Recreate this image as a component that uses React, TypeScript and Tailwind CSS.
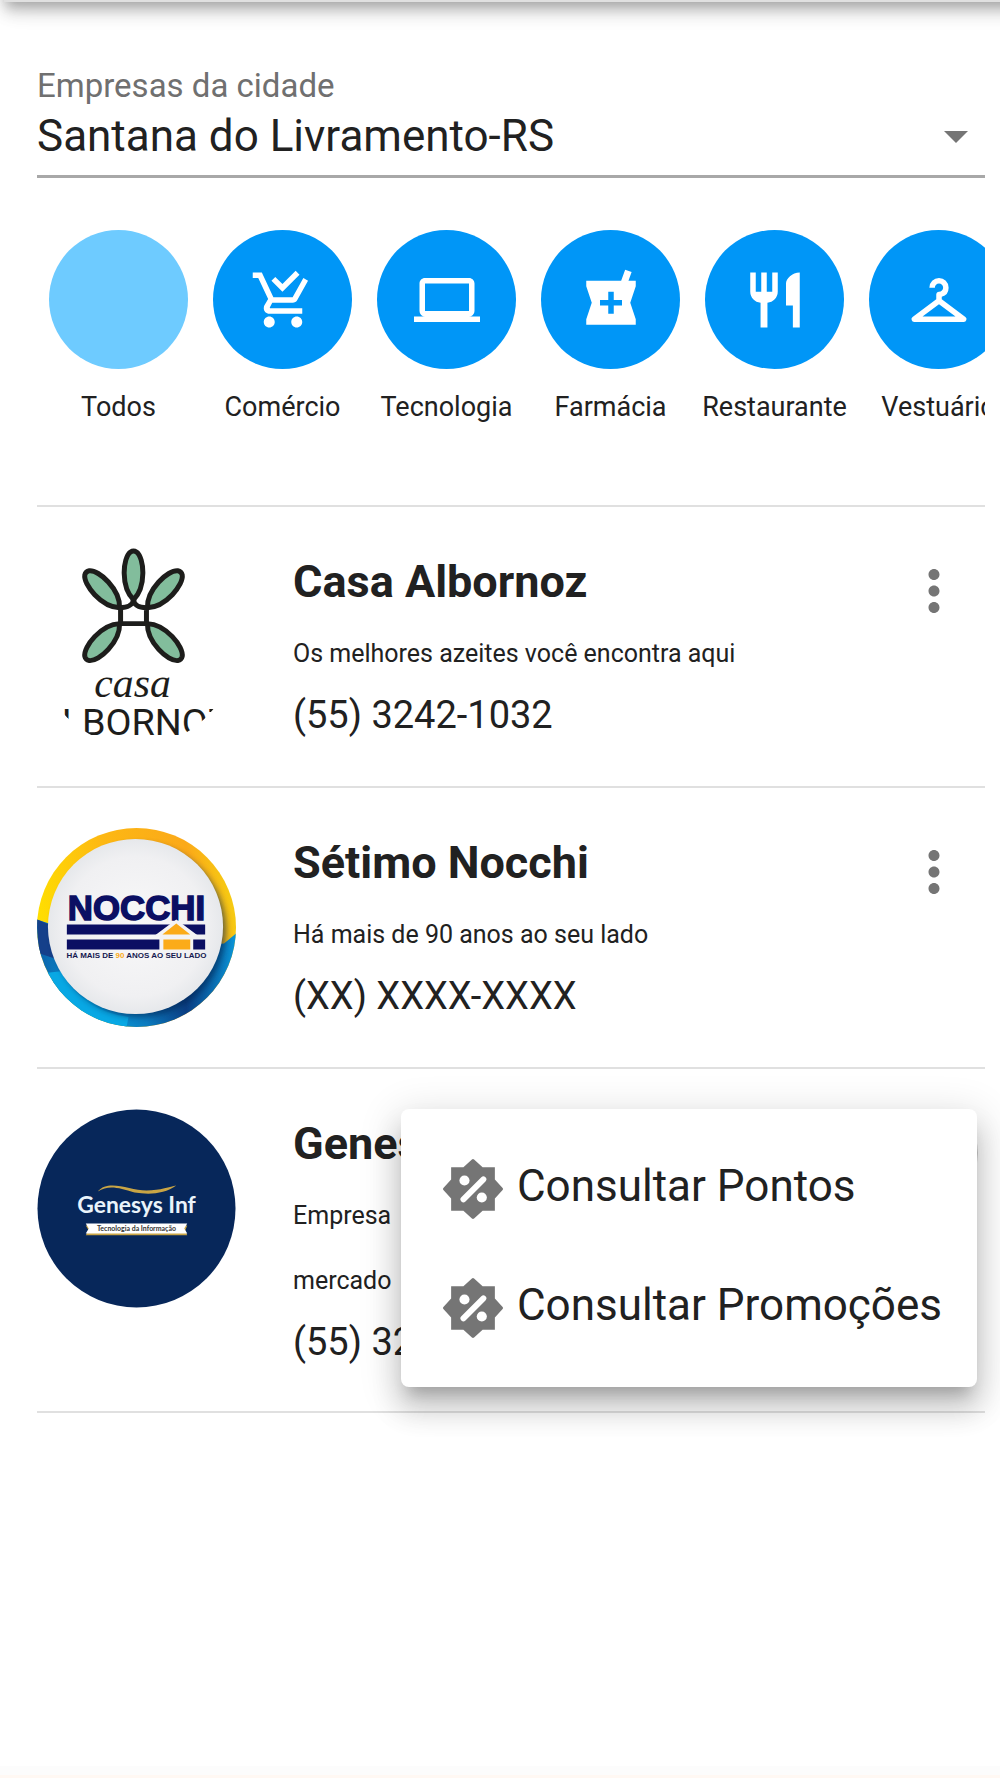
import type { ReactNode } from "react";

const ICONS = {
  cart: "M9 20C9 21.1 8.1 22 7 22S5 21.1 5 20 5.9 18 7 18 9 18.9 9 20M17 18C15.9 18 15 18.9 15 20S15.9 22 17 22 19 21.1 19 20 18.1 18 17 18M7.2 14.8V14.7L8.1 13H15.5C16.2 13 16.9 12.6 17.2 12L21.1 5L19.4 4L15.5 11H8.5L4.3 2H1V4H3L6.6 11.6L5.2 14C5.1 14.3 5 14.6 5 15C5 16.1 5.9 17 7 17H19V15H7.4C7.3 15 7.2 14.9 7.2 14.8M18 2.8L16.6 1.4L11.8 6.2L9.2 3.6L7.8 5L11.8 9L18 2.8Z",
  laptop:
    "M4,6H20V16H4M20,18A2,2 0 0,0 22,16V6C22,4.89 21.1,4 20,4H4C2.89,4 2,4.89 2,6V16A2,2 0 0,0 4,18H0V20H24V18H20Z",
  pharmacy:
    "M21,5H18.35L19.5,1.85L17.15,1L15.69,5H3V7L5,13L3,19V21H21V19L19,13L21,7V5M16,14H13V17H11V14H8V12H11V9H13V12H16V14Z",
  restaurant:
    "M11 9H9V2H7v7H5V2H3v7c0 2.12 1.66 3.84 3.75 3.97V22h2.5v-9.03C11.34 12.84 13 11.12 13 9V2h-2v7zm5-3v8h2.5v8H21V2c-2.76 0-5 2.24-5 4z",
  hanger:
    "M12 4A3.5 3.5 0 0 0 8.5 7.5H10.5A1.5 1.5 0 0 1 12 6A1.5 1.5 0 0 1 13.5 7.5A1.5 1.5 0 0 1 12 9C11.45 9 11 9.45 11 10V11.75L2.4 18.2A1 1 0 0 0 3 20H21A1 1 0 0 0 21.6 18.2L13 11.75V10.85A3.5 3.5 0 0 0 15.5 7.5A3.5 3.5 0 0 0 12 4M12 13.5L18 18H6L12 13.5Z",
  more: "M12 8c1.1 0 2-.9 2-2s-.9-2-2-2-2 .9-2 2 .9 2 2 2zm0 2c-1.1 0-2 .9-2 2s.9 2 2 2 2-.9 2-2-.9-2-2-2zm0 6c-1.1 0-2 .9-2 2s.9 2 2 2 2-.9 2-2-.9-2-2-2z",
};

function Icon({ d }: { d: string }) {
  return (
    <svg viewBox="0 0 24 24" className="size-[66px]" fill="currentColor" aria-hidden="true">
      <path d={d} />
    </svg>
  );
}

const categories: { label: string; icon?: string }[] = [
  { label: "Todos" },
  { label: "Comércio", icon: ICONS.cart },
  { label: "Tecnologia", icon: ICONS.laptop },
  { label: "Farmácia", icon: ICONS.pharmacy },
  { label: "Restaurante", icon: ICONS.restaurant },
  { label: "Vestuário", icon: ICONS.hanger },
];

function OfferIcon() {
  return (
    <svg viewBox="0 0 24 24" className="size-16 shrink-0 text-[#757575]" aria-hidden="true">
      <path
        fill="currentColor"
        d="M20.2 8.4V3.8h-4.600L12.400.9a.6.6 0 0 0-.8 0L8.400 3.800H3.800v4.600L.9 11.600a.6.6 0 0 0 0 .8L3.800 15.600v4.600h4.600l3.200 2.900a.6.6 0 0 0 .8 0l3.200-2.900h4.600v-4.600l2.900-3.200a.6.6 0 0 0 0-.8z"
      />
      <circle cx="8.800" cy="8.800" r="1.900" fill="#fff" />
      <circle cx="15.300" cy="15.200" r="1.900" fill="#fff" />
      <path d="M8.400 15.900 15.900 8.400" stroke="#fff" strokeWidth="2.200" strokeLinecap="round" />
    </svg>
  );
}

function AlbornozLogo() {
  const leaf = "M0 0C-13-13-11-42-3-48Q0-50 3-48C11-42 13-13 0 0Z";
  return (
    <svg viewBox="0 0 200 200" className="size-full" role="img" aria-label="Casa Albornoz">
      <defs>
        <clipPath id="albornoz-clip">
          <circle cx="100" cy="101" r="99" />
        </clipPath>
      </defs>
      <g fill="#82bd9c" stroke="#1d1d1b" strokeWidth="5" strokeLinejoin="round">
        <path d={leaf} transform="translate(97 53)" />
        <path d={leaf} transform="translate(83 61) rotate(-43)" />
        <path d={leaf} transform="translate(111 61) rotate(43)" />
        <path d={leaf} transform="translate(83 77) rotate(-137)" />
        <path d={leaf} transform="translate(111 77) rotate(137)" />
      </g>
      <path
        d="M84 59V77H110V59M83 61C91 61 97 58 97 52 97 58 102 61 110 61"
        fill="none"
        stroke="#1d1d1b"
        strokeWidth="5"
      />
      <text
        x="96"
        y="151"
        textAnchor="middle"
        fontFamily="'Liberation Serif', serif"
        fontStyle="italic"
        fontSize="42"
        fill="#1d1d1b"
      >
        casa
      </text>
      <g clipPath="url(#albornoz-clip)">
        <text x="0" y="189" fontFamily="Roboto, sans-serif" fontSize="38" fill="#1d1d1b">
          ALBORNOZ
        </text>
      </g>
    </svg>
  );
}

function NocchiLogo() {
  return (
    <svg viewBox="0 0 200 200" className="size-full" role="img" aria-label="Nocchi">
      <defs>
        <clipPath id="nocchi-clip">
          <circle cx="100" cy="100" r="100" />
        </clipPath>
        <linearGradient id="nocchi-gold" x1="0" y1="0.500" x2="1" y2="0.300">
          <stop offset="0" stopColor="#ffe000" />
          <stop offset="0.400" stopColor="#fdb813" />
          <stop offset="0.800" stopColor="#fba919" />
          <stop offset="1" stopColor="#f5d011" />
        </linearGradient>
        <linearGradient id="nocchi-blue" x1="0" y1="0" x2="1" y2="0">
          <stop offset="0" stopColor="#0d5fa8" />
          <stop offset="0.250" stopColor="#05a3e0" />
          <stop offset="0.550" stopColor="#0b7cc0" />
          <stop offset="0.750" stopColor="#0b3f84" />
          <stop offset="1" stopColor="#0a96d8" />
        </linearGradient>
        <radialGradient id="nocchi-face">
          <stop offset="0" stopColor="#f8f8f9" />
          <stop offset="0.800" stopColor="#f0f0f2" />
          <stop offset="1" stopColor="#e6e8eb" />
        </radialGradient>
        <filter id="nocchi-shade" x="-20%" y="-20%" width="140%" height="140%">
          <feGaussianBlur stdDeviation="3" />
        </filter>
      </defs>
      <g clipPath="url(#nocchi-clip)">
        <rect width="200" height="200" fill="url(#nocchi-gold)" />
        <path d="M0 92 12 96 100 120 188 116 200 106V200H0Z" fill="url(#nocchi-blue)" />
        <path d="M0 92 12 97 20 132 2 126Z" fill="#15408a" />
        <path d="M6 146 24 144Q46 184 92 190L90 200Q30 190 6 146Z" fill="#08a8e4" />
        <circle cx="103" cy="103" r="87" fill="#06224f" opacity="0.600" filter="url(#nocchi-shade)" />
      </g>
      <circle cx="99" cy="99" r="88" fill="url(#nocchi-face)" />
      <text
        x="100"
        y="92"
        textAnchor="middle"
        fontFamily="'Liberation Sans', sans-serif"
        fontWeight="700"
        fontSize="35"
        fill="#0b0f63"
        stroke="#0b0f63"
        strokeWidth="1.500"
      >
        NOCCHI
      </text>
      <path d="M30 97H169V107H30ZM30 112H169V122H30Z" fill="#0b0f63" />
      <path d="M140 92 163 109H157V123H123V109H117Z" fill="#f3f3f4" />
      <path d="M140 96 154 107H126ZM127 112H154V122H127Z" fill="#fbab18" />
      <text
        x="100"
        y="131"
        textAnchor="middle"
        fontFamily="'Liberation Sans', sans-serif"
        fontWeight="700"
        fontSize="8"
        fill="#14184f"
      >
        HÁ MAIS DE <tspan fill="#fbab18">90</tspan> ANOS AO SEU LADO
      </text>
    </svg>
  );
}

function GenesysLogo() {
  return (
    <svg viewBox="0 0 200 200" className="size-full" role="img" aria-label="Genesys Inf">
      <circle cx="100" cy="100" r="99.500" fill="#07275a" />
      <path d="M61 83C72 70 93 82 110 82 124 82 134 78 140 77 128 86 112 86 98 84 82 79 72 76 61 83Z" fill="#c9a545" />
      <text
        x="100"
        y="105"
        textAnchor="middle"
        fontFamily="Lato, sans-serif"
        fontWeight="700"
        fontSize="23"
        fill="#eaf4fb"
      >
        Genesys Inf
      </text>
      <path d="M49 117H151L149 122 151 127H49L52 122Z" fill="#c9a545" />
      <path d="M49 115H151L148 120 151 125H49L52 120Z" fill="#fff" />
      <text
        x="100"
        y="123"
        textAnchor="middle"
        fontFamily="Lato, sans-serif"
        fontWeight="700"
        fontSize="7"
        fill="#333"
      >
        Tecnologia da Informação
      </text>
    </svg>
  );
}

interface Company {
  name: string;
  about: ReactNode;
  phone: string;
  logo: ReactNode;
  open?: boolean;
}

const companies: Company[] = [
  {
    name: "Casa Albornoz",
    about: "Os melhores azeites você encontra aqui",
    phone: "(55) 3242-1032",
    logo: <AlbornozLogo />,
  },
  {
    name: "Sétimo Nocchi",
    about: "Há mais de 90 anos ao seu lado",
    phone: "(XX) XXXX-XXXX",
    logo: <NocchiLogo />,
  },
  {
    name: "Genesys Inf",
    about: (
      <>
        Empresa
        <br />
        mercado
      </>
    ),
    phone: "(55) 3242",
    logo: <GenesysLogo />,
    open: true,
  },
];

function OptionsMenu() {
  return (
    <div
      role="menu"
      className="absolute top-10 right-2 z-10 flex flex-col rounded-lg bg-white py-5 shadow-[0_14px_14px_-8px_rgba(0,0,0,0.2),0_22px_28px_3px_rgba(0,0,0,0.14),0_8px_39px_6px_rgba(0,0,0,0.12)]"
    >
      {["Consultar Pontos", "Consultar Promoções"].map((label) => (
        <button
          key={label}
          role="menuitem"
          className="flex h-[119px] items-center gap-3 pr-[35px] pl-10 text-[44px] whitespace-nowrap"
        >
          <OfferIcon />
          <span className="pb-[6px]">{label}</span>
        </button>
      ))}
    </div>
  );
}

function CompanyRow({ company }: { company: Company }) {
  return (
    <li className="relative flex border-b-2 border-[#e0e0e0] pt-9 pb-10">
      <div className="mt-1 size-[199px] shrink-0">{company.logo}</div>
      <div className="ml-[57px] min-w-0 flex-1">
        <h2 className="text-[45px] leading-[78px] font-bold">{company.name}</h2>
        <p className="text-[25px] leading-[65px]">{company.about}</p>
        <p className="text-[38px] leading-[58px]">{company.phone}</p>
      </div>
      <button
        aria-label={`Opções de ${company.name}`}
        className={`mt-1 mr-[7px] flex size-[88px] shrink-0 items-center justify-center rounded-full text-[#757575] ${
          company.open ? "bg-[#d0d0d0]" : ""
        }`}
      >
        <Icon d={ICONS.more} />
      </button>
      {company.open && <OptionsMenu />}
    </li>
  );
}

export default function App() {
  return (
    <div className="relative flex min-h-screen flex-col overflow-hidden bg-white font-[Roboto,sans-serif] text-[#212121]">
      <header className="absolute -top-20 -right-10 left-1 h-[82px] border-b-2 border-[#e0e0e0] bg-white shadow-[0_6px_11px_-3px_rgba(0,0,0,0.2),0_11px_14px_0_rgba(0,0,0,0.14),0_3px_28px_0_rgba(0,0,0,0.12)]" />
      <main className="flex-1 pr-[15px] pl-[37px]">
        <div className="relative border-b-3 border-[#a8a8a8] pt-16">
          <label htmlFor="city" className="block text-[33px] leading-[44px] text-[#707070]">
            Empresas da cidade
          </label>
          <select
            id="city"
            className="block h-[67px] w-full appearance-none bg-transparent pb-3 text-[44px] leading-[56px] outline-none"
          >
            <option>Santana do Livramento-RS</option>
          </select>
          <svg
            viewBox="0 0 24 12"
            className="pointer-events-none absolute right-[17px] bottom-8 h-3 w-6 text-[#757575]"
            fill="currentColor"
            aria-hidden="true"
          >
            <path d="M0 0H24L12 12Z" />
          </svg>
        </div>

        <nav className="flex gap-[25px] overflow-hidden border-b-2 border-[#e0e0e0] pt-[52px] pb-[79px] pl-3">
          {categories.map((c) => (
            <button key={c.label} className="flex w-[139px] shrink-0 flex-col items-center gap-[19px]">
              <span
                className={`flex size-[139px] items-center justify-center rounded-full text-white ${
                  c.icon ? "bg-[#0096f7]" : "bg-[#6ecbff]"
                }`}
              >
                {c.icon && <Icon d={c.icon} />}
              </span>
              <span className="text-[27px] leading-[38px] whitespace-nowrap">{c.label}</span>
            </button>
          ))}
        </nav>

        <ul>
          {companies.map((c) => (
            <CompanyRow key={c.name} company={c} />
          ))}
        </ul>
      </main>
      <footer className="h-3 border-b-3 border-[#fff8f3] bg-[#fcfcfc]" />
    </div>
  );
}
